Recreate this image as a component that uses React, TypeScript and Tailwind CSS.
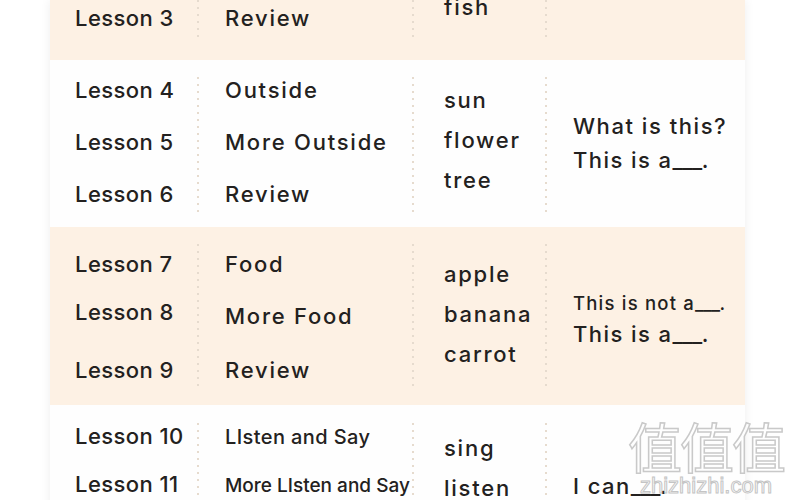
import type { ReactNode } from "react";

/**
 * =========================================================
 * LESSON TABLE (cropped view)
 * - Alternating peach / white row bands
 * - Dotted separators between the four columns
 * =========================================================
 */

const font = "font-['Inter','Liberation_Sans',sans-serif]";
const ROW = "grid grid-cols-[147px_2px_213px_2px_131px_2px_198px]";

// Dotted column divider
function Dots({ className = "" }: { className?: string }) {
  return (
    <div
      className={`w-[2px] bg-[repeating-linear-gradient(to_bottom,#e6dbce_0px,#e6dbce_2px,transparent_2px,transparent_7px)] ${className}`}
    />
  );
}

// One text line of the table (size + tracking passed separately to avoid clashes)
function Line({
  children,
  size = "text-[22px] leading-[26px]",
  track = "tracking-[0.08em]",
  className = "",
}: {
  children: ReactNode;
  size?: string;
  track?: string;
  className?: string;
}) {
  return (
    <div
      className={`${size} ${track} font-medium text-[#232120] whitespace-nowrap ${className}`}
    >
      {children}
    </div>
  );
}

// Lesson label column keeps tighter spacing
function Lesson({ children, className = "" }: { children: ReactNode; className?: string }) {
  return (
    <Line track="tracking-[0.02em]" className={className}>
      {children}
    </Line>
  );
}

// Blank for the sentence patterns
const Blank = () => <span className="tracking-[-0.02em]">___</span>;

export default function App() {
  return (
    <div
      className={`relative w-[790px] h-[500px] overflow-hidden bg-white ${font}`}
    >
      {/* ================= CARD ================= */}
      <div className="ml-[50px] w-[695px] flex flex-col shadow-[0_0_10px_rgba(0,0,0,0.07)]">
        {/* ================= ROW: LESSONS 1-3 (cut off) ================= */}
        <div className={`h-[60px] overflow-hidden bg-[#fdf1e4] ${ROW}`}>
          <div className="pl-[25px] pt-[5px]">
            <Lesson>Lesson 3</Lesson>
          </div>
          <Dots className="h-[37px]" />
          <div className="pl-[26px] pt-[5px]">
            <Line>Review</Line>
          </div>
          <Dots className="h-[37px]" />
          <div className="pl-[30px] mt-[-6px]">
            <Line>fish</Line>
          </div>
          <Dots className="h-[37px]" />
          <div />
        </div>

        {/* ================= ROW: LESSONS 4-6 ================= */}
        <div className={`h-[167px] bg-[#fefefe] ${ROW}`}>
          <div className="pl-[25px] pt-[17px] flex flex-col gap-[26px]">
            <Lesson>Lesson 4</Lesson>
            <Lesson>Lesson 5</Lesson>
            <Lesson>Lesson 6</Lesson>
          </div>
          <Dots className="mt-[17px] h-[136px]" />
          <div className="pl-[26px] pt-[17px] flex flex-col gap-[26px]">
            <Line>Outside</Line>
            <Line>More Outside</Line>
            <Line>Review</Line>
          </div>
          <Dots className="mt-[17px] h-[136px]" />
          <div className="pl-[30px] pt-[27px] flex flex-col gap-[14px]">
            <Line>sun</Line>
            <Line>flower</Line>
            <Line>tree</Line>
          </div>
          <Dots className="mt-[17px] h-[136px]" />
          <div className="pl-[26px] pt-[53px] flex flex-col gap-[8px]">
            <Line track="tracking-[0.07em]">What is this?</Line>
            <Line track="tracking-[0.065em]">
              This is a<Blank />.
            </Line>
          </div>
        </div>

        {/* ================= ROW: LESSONS 7-9 ================= */}
        <div className={`h-[178px] bg-[#fdf1e4] ${ROW}`}>
          <div className="pl-[25px] pt-[24px] flex flex-col">
            <Lesson>Lesson 7</Lesson>
            <Lesson className="mt-[22px]">Lesson 8</Lesson>
            <Lesson className="mt-[32px]">Lesson 9</Lesson>
          </div>
          <Dots className="mt-[17px] h-[144px]" />
          <div className="pl-[26px] pt-[24px] flex flex-col">
            <Line>Food</Line>
            <Line className="mt-[26px]">More Food</Line>
            <Line className="mt-[28px]">Review</Line>
          </div>
          <Dots className="mt-[17px] h-[144px]" />
          <div className="pl-[30px] pt-[34px] flex flex-col gap-[14px]">
            <Line>apple</Line>
            <Line>banana</Line>
            <Line>carrot</Line>
          </div>
          <Dots className="mt-[17px] h-[144px]" />
          <div className="pl-[26px] pt-[65px] flex flex-col">
            <Line size="text-[18.5px] leading-[22px]" track="tracking-[0.065em]">
              This is not a<Blank />.
            </Line>
            <Line className="mt-[7px]" track="tracking-[0.065em]">
              This is a<Blank />.
            </Line>
          </div>
        </div>

        {/* ================= ROW: LESSONS 10-12 ================= */}
        <div className={`h-[120px] bg-[#fefefe] ${ROW}`}>
          <div className="pl-[25px] pt-[18px] flex flex-col gap-[22px]">
            <Lesson>Lesson 10</Lesson>
            <Lesson>Lesson 11</Lesson>
          </div>
          <Dots className="mt-[18px] h-[102px]" />
          <div className="pl-[26px] pt-[20px] flex flex-col gap-[25px]">
            <Line size="text-[20px] leading-[24px]" track="tracking-[0.02em]">
              LIsten and Say
            </Line>
            <Line size="text-[19px] leading-[24px]" track="tracking-[0em]">
              More LIsten and Say
            </Line>
          </div>
          <Dots className="mt-[18px] h-[102px]" />
          <div className="pl-[30px] pt-[30px] flex flex-col gap-[14px]">
            <Line>sing</Line>
            <Line>listen</Line>
          </div>
          <Dots className="mt-[18px] h-[102px]" />
          <div className="pl-[26px] pt-[68px]">
            <Line track="tracking-[0.065em]">
              I can<Blank />.
            </Line>
          </div>
        </div>
      </div>

      {/* ================= WATERMARK ================= */}
      <div className="absolute right-[6px] bottom-[2px] flex flex-col items-center pointer-events-none">
        <div className="text-[54px] leading-[56px] tracking-[-2px] text-white/40 [-webkit-text-stroke:1.5px_#c9c9c9] font-['Noto_Sans_CJK_SC',sans-serif]">
          值值值
        </div>
        <div className="text-[22px] leading-[24px] text-white/40 [-webkit-text-stroke:1px_#c4c4c4] font-['Liberation_Sans',sans-serif]">
          zhizhizhi.com
        </div>
      </div>
    </div>
  );
}
